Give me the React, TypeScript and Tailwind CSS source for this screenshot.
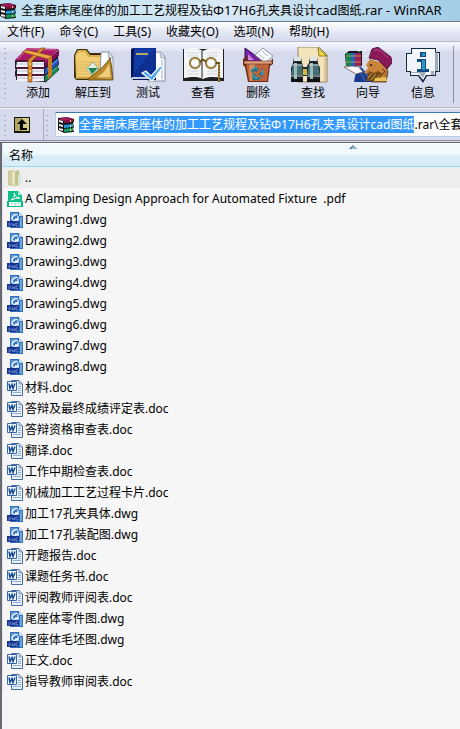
import { useEffect, useRef } from 'react';
import type { ReactNode } from 'react';

function ArchiveIcon() {
  return (
    <svg viewBox="0 0 16 16" className="size-4 shrink-0" aria-hidden="true">
      <path d="M0 1 9 0l7 2v3l-1 1 1 4-1 1 1 4-10 1-6-3Z" fill="#151a1c" />
      <path d="m0 2 9-2 6 2-9 2Z" fill="#a51b58" />
      <path d="M6 4 15 2v3L6 6Z" fill="#8a1245" />
      <path d="m6 8 9-1v3l-9 1Z" fill="#2497d6" />
      <path d="m6 12 9-1v3l-9 1Z" fill="#159a5d" />
      <path d="m1 3 4 1v2L1 5Zm0 4 4 1v2L1 9Zm0 4 4 1v2l-4-1Z" fill="#f4e8e6" />
      <path d="M12 3h1v2h-1Zm0 5h1v2h-1Zm0 4h1v2h-1Z" fill="#f0d86a" />
    </svg>
  );
}

function AddIcon() {
  return (
    <>
      <path d="m30 16 15-13v5l-1 2 1 7-1 2 1 4-14 13Z" fill="#161a2c" />
      <path d="m30 16 15-13v5L31 21Z" fill="#7a0d4f" />
      <path d="m31 22 13-11v6L31 28Z" fill="#2554c0" />
      <path d="m31 29 13-11v6L31 35Z" fill="#178a4a" />
      <path d="m33 22 10-9M33 29l10-9" stroke="#79a6ee" />
      <path d="m1 13 12-12 32 1-14 14Z" fill="#a81b66" />
      <path d="m4 12 10-10 28 1" stroke="#d761a0" fill="none" />
      <path d="M1 13h30v22L2 33v-3l-1-1v-5l1-1-1-1Z" fill="#211b28" />
      <path d="M3 15h27v5H2Zm0 7h27v5H3Zm0 7h27v5H3Z" fill="#f3f4fa" />
      <path d="M3 17h27M3 24h27M3 31h27" stroke="#b6bbcb" />
      <path d="M1 14h30M1 21h30M1 28h30" stroke="#7a174f" />
      <path d="m14 13 13-12h4L18 14v21h-4Z" fill="#d98a28" stroke="#70410f" strokeWidth=".6" />
      <path d="m8 5 5-2 25 6-4 3Z" fill="#eea544" stroke="#834b11" strokeWidth=".6" />
      <path d="M34 12v20l4-4V9Z" fill="#c57b20" />
      <circle cx="16" cy="17" r="1" fill="#ffe981" />
      <circle cx="16" cy="24" r="1" fill="#ffe981" />
      <circle cx="16" cy="31" r="1" fill="#ffe981" />
    </>
  );
}

function ExtractIcon() {
  return (
    <>
      <path d="M5 8 8 2h10l3 4h18l4 4v23H7l-2-3Z" fill="#3c2d0d" />
      <path d="m6 8 3-5h8l4 5h14v24H7Z" fill="#d7ad48" />
      <path d="m7 9 3-4h6l3 5h15v21H8Z" fill="#f0ce75" />
      <path d="M8 15h24M8 18h24M8 21h24M8 24h24M8 27h24" stroke="#dbb258" strokeWidth=".8" />
      <path d="M32 5h8l4 5v20H31Z" fill="#fbfdff" stroke="#67707e" strokeWidth=".7" />
      <path d="m39 5 1 6h4" fill="#d4d9e3" stroke="#707884" strokeWidth=".6" />
      <path d="M20 31c8-6 15-11 21-20 2 8 2 15 3 22H19Z" fill="#bc8927" stroke="#513b13" strokeWidth=".8" />
      <path d="M27 31c7-4 11-9 13-15l2 16Z" fill="#efce7c" />
      <path d="m24 15 6 7-7 6-6-6Z" fill="#dcece0" stroke="#8a9c7b" strokeWidth=".8" />
      <path d="M19 21h10l-6 6Z" fill="#23824b" />
      <path d="M8 31h34" stroke="#9b7021" />
    </>
  );
}

function TestIcon() {
  return (
    <>
      <path d="M29 5h8l4 5v24H24V6Z" fill="#fafcff" stroke="#687789" strokeWidth=".8" />
      <path d="m36 6 1 5h4" fill="#cbd6e6" stroke="#7d8ba0" strokeWidth=".6" />
      <path d="M38 13v19" stroke="#a5afc3" />
      <path d="M7 2 9 1h23v32H9l-2-3Z" fill="#061553" />
      <path d="M10 1h22v29H9Z" fill="#0d2f91" />
      <path d="M11 2h19L10 26Z" fill="#123ca3" />
      <path d="M12 7h12" stroke="#e3ce4e" strokeWidth="1.5" />
      <path d="M8 31h23" stroke="#c6cce5" strokeWidth="2" />
      <path d="m18 26 4-2 5 5 9-10 3 1-11 14Z" fill="#4ba8ef" stroke="#fff" strokeWidth="1.2" />
    </>
  );
}

function ViewIcon() {
  return (
    <>
      <path d="M4 2h41v32H4Z" fill="#20211f" />
      <path d="M5 2c8-2 14-1 19 2v28c-6-3-12-2-19-1Zm39 0c-8-2-15-1-20 2v28c6-3 13-2 20-1Z" fill="#f2f4f6" />
      <path d="M23 4v27" stroke="#858b91" strokeWidth="2" />
      <path d="M8 6h12M8 9h12M8 24h12M8 27h12M28 6h11M28 9h11M28 24h11M28 27h11" stroke="#c5cbd2" strokeWidth=".7" />
      <circle cx="16" cy="16" r="5" fill="#fff" fillOpacity=".7" stroke="#654d15" strokeWidth="2" />
      <circle cx="32" cy="16" r="5" fill="#fff" fillOpacity=".7" stroke="#654d15" strokeWidth="2" />
      <circle cx="16" cy="16" r="5" fill="none" stroke="#d8b85a" strokeWidth=".8" />
      <circle cx="32" cy="16" r="5" fill="none" stroke="#d8b85a" strokeWidth=".8" />
      <path d="M21 15c2-3 4-3 6 0M37 16h3v19" fill="none" stroke="#654d15" strokeWidth="2" />
      <path d="M40 17v17" stroke="#d8b85a" strokeDasharray="2 1" />
    </>
  );
}

function DeleteIcon() {
  return (
    <>
      <path d="M11 1v14h19Z" fill="#7920a8" stroke="#301247" />
      <path d="m14 7 6 6h-6Z" fill="#c58add" />
      <path d="m21 8 8-7 10 8-8 7Z" fill="#f7f8fc" stroke="#7c818c" strokeWidth=".8" />
      <path d="m25 7 5 5M28 4l6 5" stroke="#aeb5c4" />
      <path d="m9 12 4-3 1 6h22l3-4v6l-3 2-2 16H14l-3-15-2-2Z" fill="#6b2b17" />
      <path d="M12 16h23l-2 18H15Z" fill="#bd643b" />
      <path d="M15 17h6l-3 17h-2Z" fill="#dc8b61" />
      <path d="M10 14h28v3H10Z" fill="#e2a07a" stroke="#60301d" strokeWidth=".6" />
      <path d="m17 23 4-4 4 3-2 1v2l-3-1-2 3Zm11-2 2 5-3 5v-3h-3l3-3Zm-10 7 2-2 3 4h3l-1 3h-6Z" fill="#1b718b" />
      <path d="m18 23 3-3 2 2M28 23l1 3-2 2M19 28l2 3h3" stroke="#91e0da" fill="none" strokeWidth=".7" />
    </>
  );
}

function FindIcon() {
  return (
    <>
      <path d="M9 0h21l8 8v27H9Z" fill="#f4e4bc" stroke="#806c42" strokeWidth=".8" />
      <path d="m29 1 1 8h8Z" fill="#f5d837" stroke="#6f601d" strokeWidth=".8" />
      <path d="M36 11v23" stroke="#c3ad7d" />
      <path d="M5 10h7l1 6 1 3v16H2V21l2-5Zm16 0h7l1 6 2 5v14H18V19l2-3Z" fill="#1b2428" />
      <path d="M14 20h5v9h-5Z" fill="#172c32" />
      <path d="M5 10h7v4H5Zm16 0h7v4h-7Z" fill="#dce4e5" />
      <path d="M4 17h9l1 11H2Zm16 0h9l2 11H18Z" fill="#477076" />
      <path d="M5 16h3v16H5Zm16 0h3v16h-3Z" fill="#9cb9ba" />
      <path d="M2 29h12M18 29h13M3 18h10M20 18h10" stroke="#c7d0cf" />
      <path d="M14 22h4v6h-4Z" fill="#d8b439" />
      <path d="M2 32h12v3H2Zm16 0h13v3H18Z" fill="#0c1012" />
    </>
  );
}

function WizardIcon() {
  return (
    <>
      <path d="M10 35c1-8 3-12 6-16l6 6 8-1 13 11Z" fill="#18388b" />
      <path d="m14 20 7 14M19 23l8 11" stroke="#4b78ce" />
      <path d="m31 27 10-10 3 8-2 10H28Z" fill="#b0742e" stroke="#49301c" strokeWidth=".8" />
      <path d="m26 12 12 4 5 7-5 9-8-2-6 3 1-6-5-1 4-5-2-3Z" fill="#c9843a" />
      <path d="m25 24 5 2 4-2 5 3-5 7H22Z" fill="#754918" />
      <path d="m24 31 4-5M27 33l5-6M31 33l5-5" stroke="#e5b75b" strokeWidth=".8" />
      <circle cx="27" cy="18" r="1" fill="#17151c" />
      <path d="m38 22 3 2-2 3" fill="none" stroke="#5c2b14" />
      <path d="m25 11 3-9 6-2 13 10 1 6-5 6-5-5-4-4Z" fill="#8d1859" stroke="#3c112e" strokeWidth=".8" />
      <path d="M30 3c6-1 10 3 14 8" fill="none" stroke="#bd518b" />
      <path d="m1 7 4-3h13v15H2Z" fill="#181820" />
      <path d="M2 6h5v13H2Z" fill="#16824f" />
      <path d="M7 6h4v13H7Z" fill="#2363bd" />
      <path d="M11 6h6v13h-6Z" fill="#a22155" />
      <path d="M2 9h15M2 15h15" stroke="#e5c856" strokeWidth=".6" />
      <path d="m0 20 8-1 7 1 4 5-7 2-7-4Z" fill="#fff8f6" stroke="#665c66" strokeWidth=".8" />
      <path d="m31 31 11-1 1 4H30Z" fill="#e9c351" />
      <path d="M15 1v4M13 3h4M21 2v3M20 9h3" stroke="#fff" />
    </>
  );
}

function InfoIcon() {
  return (
    <>
      <path d="M12 1h25v4h4v20h-4v4h-9l-4 7-5-7h-8v-4H7V6h5Z" fill="#162c40" />
      <path d="M13 2h23v4h4v18h-4v4h-9l-3 5-4-5h-8v-4H8V7h5Z" fill="#f2f6fa" />
      <path d="M36 5v19h-4v4h3v-4h4V7ZM12 25h15l-3 6-4-5h-8Z" fill="#9eacba" />
      <path d="M10 8h4M14 4h21" stroke="#fff" />
      <path d="M21 5h6v5h-6ZM18 12h9v10h3v3H18v-3h4v-7h-4Z" fill="#124b82" />
      <path d="M23 6h3v3h-3ZM23 13h3v10h-3Z" fill="#2f91c7" />
    </>
  );
}

function PdfIcon() {
  return (
    <svg viewBox="0 0 16 16" className="size-4 shrink-0" aria-hidden="true">
      <path d="M1 0h10l4 4v12H1Z" fill="#0fc08a" />
      <path d="M11 0v4h4Z" fill="#a5efd2" />
      <path d="M4 9c3-2 4-4 3-7 1 3 3 5 6 5-4 0-6 1-9 2Z" fill="none" stroke="#fff" />
      <path d="M0 10h16v6H0Z" fill="#0fb985" />
      <path d="M2 11h12v4H2Z" fill="#effcf6" />
      <path d="M5 14v-2h1M8 12v2h1v-2ZM11 14v-2h2" fill="none" stroke="#7ed8b5" strokeWidth=".7" />
    </svg>
  );
}

function DwgIcon() {
  return (
    <svg viewBox="0 0 16 16" className="size-4 shrink-0" aria-hidden="true">
      <path d="M3 0h9l4 4v12H3Z" fill="#2f6fbd" />
      <path d="M12 0v4h4Z" fill="#c4dcf2" />
      <path d="M4 1h7L4 9Z" fill="#5f99d6" />
      <path d="M13 5v10h2V5Z" fill="#6ea6da" />
      <path d="M11 3C8 2 5 4 5 6c0 3 5 3 6 1H8M11 4v6" fill="none" stroke="#eef8ff" strokeWidth="1.3" />
      <path d="M0 9h12v6H0Z" fill="#15338f" />
      <path d="M2 11v3c2 0 2-3 0-3Zm3 0 .5 3 1-2 1 2 .5-3M11 11H9v3h2v-1" fill="none" stroke="#7c9bdb" strokeWidth=".7" />
    </svg>
  );
}

function DocIcon() {
  return (
    <svg viewBox="0 0 16 16" className="size-4 shrink-0" aria-hidden="true">
      <path d="M4.500.5H12L15.500 4v11.500h-11Z" fill="#eaf2fd" stroke="#486b9f" />
      <path d="M12 1v3h3" fill="#b7cdea" stroke="#6383b3" strokeWidth=".7" />
      <path d="M11 6.500h3M11 8.500h3M11 10.500h3M6 12.500h8" stroke="#7c9ac4" strokeWidth=".8" />
      <path d="M.5 1.500h9v9h-9Z" fill="#f3f8ff" stroke="#3565ab" />
      <path d="m2 3.500 1 5 2-4 1 4 2-5" fill="none" stroke="#174b98" strokeWidth="1.500" />
    </svg>
  );
}

function FolderIcon() {
  return (
    <svg viewBox="0 0 16 16" className="size-4 shrink-0" aria-hidden="true">
      <path d="m1 1 6-1v16l-6-1Z" fill="#cbc795" />
      <path d="m5 1 3 1v14l-3-2Z" fill="#e9e6bf" />
      <path d="m8 1 4-1 1 15-5 1Z" fill="#c0c58b" />
      <path d="m11 5 3-1v10l-3 1Z" fill="#dbe6d8" />
      <path d="M3 2v12" stroke="#dfdcb4" />
    </svg>
  );
}

const tools: { label: string; icon: ReactNode }[] = [
  { label: '添加', icon: <AddIcon /> },
  { label: '解压到', icon: <ExtractIcon /> },
  { label: '测试', icon: <TestIcon /> },
  { label: '查看', icon: <ViewIcon /> },
  { label: '删除', icon: <DeleteIcon /> },
  { label: '查找', icon: <FindIcon /> },
  { label: '向导', icon: <WizardIcon /> },
  { label: '信息', icon: <InfoIcon /> },
];

const menus = ['文件(F)', '命令(C)', '工具(S)', '收藏夹(O)', '选项(N)', '帮助(H)'];

const archiveName = '全套磨床尾座体的加工工艺规程及钻Φ17H6孔夹具设计cad图纸';

const files = [
  '..',
  'A Clamping Design Approach for Automated Fixture  .pdf',
  'Drawing1.dwg',
  'Drawing2.dwg',
  'Drawing3.dwg',
  'Drawing4.dwg',
  'Drawing5.dwg',
  'Drawing6.dwg',
  'Drawing7.dwg',
  'Drawing8.dwg',
  '材料.doc',
  '答辩及最终成绩评定表.doc',
  '答辩资格审查表.doc',
  '翻译.doc',
  '工作中期检查表.doc',
  '机械加工工艺过程卡片.doc',
  '加工17孔夹具体.dwg',
  '加工17孔装配图.dwg',
  '开题报告.doc',
  '课题任务书.doc',
  '评阅教师评阅表.doc',
  '尾座体零件图.dwg',
  '尾座体毛坯图.dwg',
  '正文.doc',
  '指导教师审阅表.doc',
];

function FileIcon({ name }: { name: string }) {
  if (name.endsWith('.pdf')) return <PdfIcon />;
  if (name.endsWith('.dwg')) return <DwgIcon />;
  if (name.endsWith('.doc')) return <DocIcon />;
  return <FolderIcon />;
}

function Grip() {
  return <div className="my-1 w-1 shrink-0 self-stretch bg-[radial-gradient(circle,#a4a9bd_1px,transparent_1px)] bg-[size:4px_5px]" />;
}

export default function App() {
  const address = useRef<HTMLInputElement>(null);

  useEffect(() => {
    const field = address.current;
    if (!field) return;
    const showStart = () => {
      field.scrollLeft = 0;
    };
    field.addEventListener('scroll', showStart);
    field.focus({ preventScroll: true });
    field.setSelectionRange(0, archiveName.length, 'backward');
    showStart();
    const frame = requestAnimationFrame(showStart);
    return () => {
      cancelAnimationFrame(frame);
      field.removeEventListener('scroll', showStart);
    };
  }, []);

  return (
    <div className="flex min-h-screen flex-col overflow-hidden bg-[#d5daed] font-['Noto_Sans','Noto_Sans_CJK_SC',sans-serif] text-xs text-black">
      <header className="flex h-[22px] items-center gap-[5px] overflow-hidden border-b border-[#657b8f] bg-linear-to-r from-[#bfe0f1] via-[#d8e8f4] to-[#a2cce6]">
        <ArchiveIcon />
        <h1 className="whitespace-nowrap">
          全套磨床尾座体的加工工艺规程及钻<span className="text-[13px]">Φ17H6</span>孔夹具设计
          <span className="text-[13px]">cad</span>图纸<span className="text-[13px]">.rar - WinRAR</span>
        </h1>
      </header>

      <nav className="flex h-5 items-center gap-[15px] border-b border-[#b5b9cc] bg-linear-to-b from-white via-[#e5e9f5] to-[#d5daed] px-[7px]">
        {menus.map((menu) => (
          <button key={menu} type="button" className="whitespace-nowrap">{menu}</button>
        ))}
      </nav>

      <div className="flex h-[66px] border-b border-[#b1b5c6] bg-linear-to-b from-[#f5f7fc] from-0% via-[#e2e6f4] via-12% to-[#d5daed] to-16% pl-[3px]">
        <Grip />
        <div className="ml-1 flex gap-px pt-[5px]">
          {tools.map((tool) => (
            <button key={tool.label} type="button" className="flex w-[54px] shrink-0 flex-col items-center">
              <svg viewBox="0 0 48 36" className="h-9 w-12" aria-hidden="true">{tool.icon}</svg>
              <span className="leading-5">{tool.label}</span>
            </button>
          ))}
        </div>
        <div className="my-1 ml-[3px] w-px shrink-0 bg-[#8c90a0]" />
      </div>

      <div className="flex h-[33px] border-t border-b border-t-[#f0f2f9] border-b-[#8b8f9c] pl-[3px]">
        <Grip />
        <button type="button" aria-label="上一级" className="mr-px flex w-[37px] shrink-0 items-center border-r border-[#a7abbd] pl-[7px]">
          <svg viewBox="0 0 16 16" className="size-4" aria-hidden="true">
            <path d="M0 0h16v16H0Z" fill="#171611" />
            <path d="M1 1h14v13H1Z" fill="#d6cb85" />
            <path d="M1 1h7v13H1Z" fill="#b3a663" />
            <path d="m8 2 5 5H9v4h4v2H6V7H3Z" fill="#050505" />
          </svg>
        </button>
        <Grip />
        <label className="my-[3px] ml-[6px] flex min-w-0 flex-1 items-center gap-[5px] overflow-hidden border border-r-0 border-[#b5cfe7] border-t-[#3d7bad] bg-white pl-[2px]">
          <ArchiveIcon />
          <input
            ref={address}
            aria-label="地址"
            defaultValue={`${archiveName}.rar\\全套磨床尾座体的加工工艺规程`}
            className="h-[17px] min-w-0 flex-1 leading-[17px] outline-none selection:bg-[#3399ff] selection:text-white"
          />
        </label>
      </div>

      <main className="mt-px flex-1 overflow-hidden border-t border-l-2 border-[#696a72] bg-[#f6f6f6]">
        <table className="w-[694px] min-w-full table-fixed border-separate border-spacing-0 border-l border-[#dfe3ec]">
          <thead>
            <tr className="h-6">
              <th className="border-t border-b border-t-white border-b-[#96d9f9] bg-linear-to-b from-[#f1f9fc] from-40% to-[#d8edf6] to-60% p-0 text-left font-normal">
                <button type="button" className="grid w-full grid-cols-[1fr_auto_1fr] items-start pl-[6px]">
                  <span className="pt-px text-left leading-5">名称</span>
                  <svg viewBox="0 0 8 4" className="h-1 w-2" aria-hidden="true">
                    <path d="m0 4 4-4 4 4Z" fill="#527f9d" />
                    <path d="m4 1 3 3H3Z" fill="#9fcde2" />
                  </svg>
                </button>
              </th>
            </tr>
          </thead>
          <tbody>
            {files.map((file, index) => (
              <tr key={file} className="h-[21px]">
                <td className={index === 0 ? 'bg-[#eeeeee] p-0' : 'p-0'}>
                  <div className="flex h-[21px] items-center gap-[2px] pl-1">
                    <FileIcon name={file} />
                    <span className="leading-5 whitespace-pre">{file}</span>
                  </div>
                </td>
              </tr>
            ))}
          </tbody>
        </table>
      </main>
    </div>
  );
}
